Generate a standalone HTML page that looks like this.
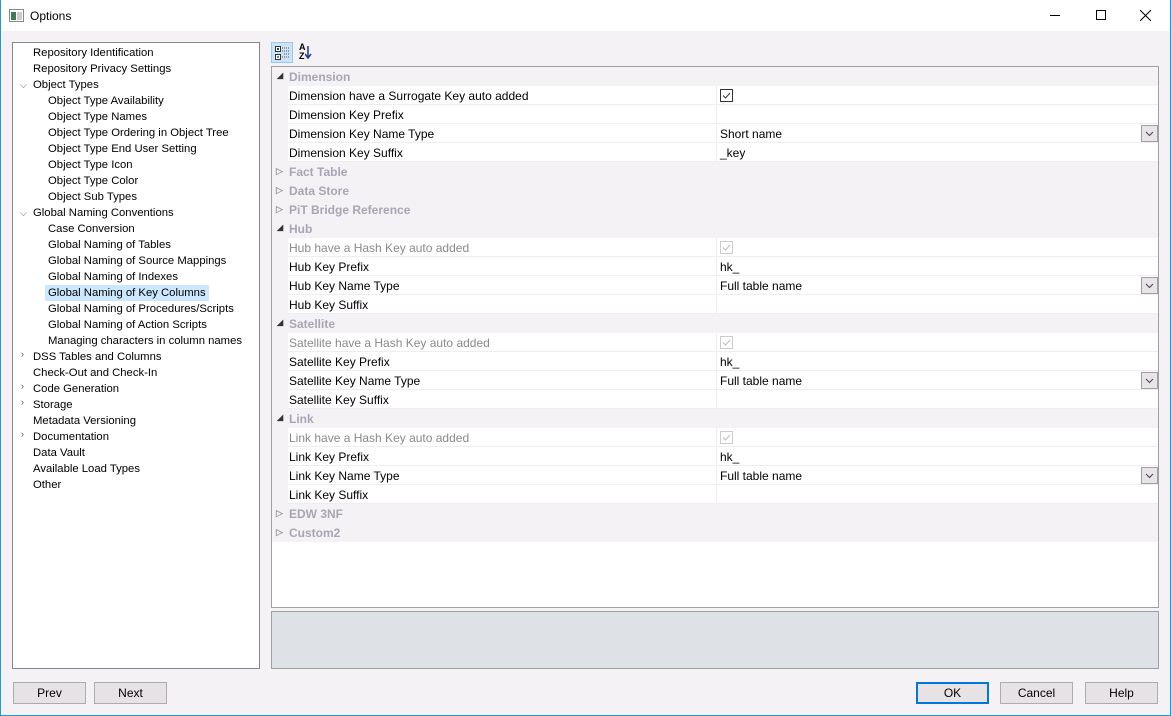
<!DOCTYPE html><html><head><style>
*{margin:0;padding:0;box-sizing:border-box}
body{width:1171px;height:716px;background:#f5f2f6;font-family:"Liberation Sans",sans-serif;font-size:12px;color:#000;position:relative;overflow:hidden}
.win{position:absolute;left:0;top:0;width:1171px;height:716px;border:1px solid #1f9ad6;border-top:none}
.title{position:absolute;left:0;top:0;width:1171px;height:31px;background:#fff}
.a{position:absolute;white-space:nowrap}
.tree{position:absolute;left:12px;top:42px;width:248px;height:627px;background:#fff;border:1px solid #828790;font-size:11.3px}
.t{position:absolute;line-height:16px;height:16px;white-space:nowrap;transform:translateY(1px)}
.chev{position:absolute;font-size:9px;color:#555;transform:translateY(1px)}
.grid{position:absolute;left:271px;top:66px;width:888px;height:542px;background:#fff;border:1px solid #a0a0a0}
.r{position:absolute;left:0;width:886px;height:19px}
.cat{background:#f5f2f6;color:#a7a6b4;font-weight:bold}
.prop{background:#fff;border-bottom:1px solid #f0edf0}
.gut{position:absolute;left:0;top:0;width:16px;height:19px;background:#f5f2f6}
.lbl{position:absolute;left:17px;top:3px}
.val{position:absolute;left:444px;top:0;width:442px;height:19px;border-left:1px solid #f0edf0;padding:3px 0 0 3px}
.dis{color:#8a8a8a}
.dd{position:absolute;right:0;top:1px;width:17px;height:17px;background:#e8e4e8;border:1px solid #a0a0a0}
.btn{position:absolute;height:22px;width:73px;background:#e6e2e6;border:1px solid #adadad;text-align:center;line-height:20px}
</style></head><body>
<div class="title"></div>
<div class="win"></div>
<svg class="a" style="left:9px;top:9px" width="15" height="13"><rect x=".5" y=".5" width="14" height="12" fill="#fff" stroke="#888"/><rect x="2" y="3" width="5" height="8" fill="#3f7a58"/><rect x="8" y="3" width="5" height="8" fill="#ccc"/></svg>
<div class="a" style="left:30px;top:9px;font-size:12px">Options</div>
<div class="a" style="left:1050px;top:15px;width:10px;height:1px;background:#000"></div>
<div class="a" style="left:1096px;top:10px;width:10px;height:10px;border:1px solid #000"></div>
<svg class="a" style="left:1140px;top:10px" width="11" height="11"><path d="M0 0L11 11M11 0L0 11" stroke="#000"/></svg>

<div class="tree">
<div class="t" style="left:20px;top:1px">Repository Identification</div>
<div class="t" style="left:20px;top:17px">Repository Privacy Settings</div>
<div class="chev" style="left:7px;top:36px">⌵</div><div class="t" style="left:20px;top:33px">Object Types</div>
<div class="t" style="left:35px;top:49px">Object Type Availability</div>
<div class="t" style="left:35px;top:65px">Object Type Names</div>
<div class="t" style="left:35px;top:81px">Object Type Ordering in Object Tree</div>
<div class="t" style="left:35px;top:97px">Object Type End User Setting</div>
<div class="t" style="left:35px;top:113px">Object Type Icon</div>
<div class="t" style="left:35px;top:129px">Object Type Color</div>
<div class="t" style="left:35px;top:145px">Object Sub Types</div>
<div class="chev" style="left:7px;top:164px">⌵</div><div class="t" style="left:20px;top:161px">Global Naming Conventions</div>
<div class="t" style="left:35px;top:177px">Case Conversion</div>
<div class="t" style="left:35px;top:193px">Global Naming of Tables</div>
<div class="t" style="left:35px;top:209px">Global Naming of Source Mappings</div>
<div class="t" style="left:35px;top:225px">Global Naming of Indexes</div>
<div class="t" style="left:32px;top:241px;background:#cce8ff;padding:0 3px">Global Naming of Key Columns</div>
<div class="t" style="left:35px;top:257px">Global Naming of Procedures/Scripts</div>
<div class="t" style="left:35px;top:273px">Global Naming of Action Scripts</div>
<div class="t" style="left:35px;top:289px">Managing characters in column names</div>
<div class="chev" style="left:8px;top:305px">›</div><div class="t" style="left:20px;top:305px">DSS Tables and Columns</div>
<div class="t" style="left:20px;top:321px">Check-Out and Check-In</div>
<div class="chev" style="left:8px;top:337px">›</div><div class="t" style="left:20px;top:337px">Code Generation</div>
<div class="chev" style="left:8px;top:353px">›</div><div class="t" style="left:20px;top:353px">Storage</div>
<div class="t" style="left:20px;top:369px">Metadata Versioning</div>
<div class="chev" style="left:8px;top:385px">›</div><div class="t" style="left:20px;top:385px">Documentation</div>
<div class="t" style="left:20px;top:401px">Data Vault</div>
<div class="t" style="left:20px;top:417px">Available Load Types</div>
<div class="t" style="left:20px;top:433px">Other</div>
</div>

<div class="a" style="left:271px;top:42px;width:22px;height:21px;background:#cce4f7;border:1px solid #99c9ef"></div>
<svg class="a" style="left:275px;top:45px" width="16" height="16"><rect x=".5" y="1.5" width="5" height="5" fill="#fff" stroke="#333"/><rect x=".5" y="9.5" width="5" height="5" fill="#fff" stroke="#333"/><path d="M2 4h2M3 3v2M2 12h2" stroke="#000"/><path d="M7 3h7M7 6h7M9 9h5M7 12h7" stroke="#555" stroke-dasharray="1 1"/></svg>
<div class="a" style="left:299px;top:43px;font-size:9px;line-height:9px;font-weight:bold">A<br>Z</div>
<svg class="a" style="left:305px;top:45px" width="8" height="16"><path d="M3 1v12M0 9l3 4 3-4" stroke="#1a3c9a" fill="none" stroke-width="1.5"/></svg>

<div class="grid">
<div class="r cat" style="top:0"><span class="a" style="left:5px;top:4px;font-size:8px;color:#333">◢</span><span class="lbl">Dimension</span></div>
<div class="r prop" style="top:19px"><div class="gut"></div><span class="lbl">Dimension have a Surrogate Key auto added</span><div class="val"><svg width="13" height="13"><rect x=".5" y=".5" width="12" height="12" fill="#fff" stroke="#333"/><path d="M3 6.5l2.5 2.5 4.5-5" stroke="#333" fill="none"/></svg></div></div>
<div class="r prop" style="top:38px"><div class="gut"></div><span class="lbl">Dimension Key Prefix</span><div class="val"></div></div>
<div class="r prop" style="top:57px"><div class="gut"></div><span class="lbl">Dimension Key Name Type</span><div class="val">Short name<div class="dd"><svg width="15" height="15"><path d="M4 6l3.5 3.5L11 6" stroke="#444" fill="none"/></svg></div></div></div>
<div class="r prop" style="top:76px"><div class="gut"></div><span class="lbl">Dimension Key Suffix</span><div class="val">_key</div></div>
<div class="r cat" style="top:95px"><span class="a" style="left:4px;top:4px;font-size:9px;color:#999">▷</span><span class="lbl">Fact Table</span></div>
<div class="r cat" style="top:114px"><span class="a" style="left:4px;top:4px;font-size:9px;color:#999">▷</span><span class="lbl">Data Store</span></div>
<div class="r cat" style="top:133px"><span class="a" style="left:4px;top:4px;font-size:9px;color:#999">▷</span><span class="lbl">PiT Bridge Reference</span></div>
<div class="r cat" style="top:152px"><span class="a" style="left:5px;top:4px;font-size:8px;color:#333">◢</span><span class="lbl">Hub</span></div>
<div class="r prop" style="top:171px"><div class="gut"></div><span class="lbl dis">Hub have a Hash Key auto added</span><div class="val"><svg width="13" height="13"><rect x=".5" y=".5" width="12" height="12" fill="#fff" stroke="#ccc"/><path d="M3 6.5l2.5 2.5 4.5-5" stroke="#bbb" fill="none"/></svg></div></div>
<div class="r prop" style="top:190px"><div class="gut"></div><span class="lbl">Hub Key Prefix</span><div class="val">hk_</div></div>
<div class="r prop" style="top:209px"><div class="gut"></div><span class="lbl">Hub Key Name Type</span><div class="val">Full table name<div class="dd"><svg width="15" height="15"><path d="M4 6l3.5 3.5L11 6" stroke="#444" fill="none"/></svg></div></div></div>
<div class="r prop" style="top:228px"><div class="gut"></div><span class="lbl">Hub Key Suffix</span><div class="val"></div></div>
<div class="r cat" style="top:247px"><span class="a" style="left:5px;top:4px;font-size:8px;color:#333">◢</span><span class="lbl">Satellite</span></div>
<div class="r prop" style="top:266px"><div class="gut"></div><span class="lbl dis">Satellite have a Hash Key auto added</span><div class="val"><svg width="13" height="13"><rect x=".5" y=".5" width="12" height="12" fill="#fff" stroke="#ccc"/><path d="M3 6.5l2.5 2.5 4.5-5" stroke="#bbb" fill="none"/></svg></div></div>
<div class="r prop" style="top:285px"><div class="gut"></div><span class="lbl">Satellite Key Prefix</span><div class="val">hk_</div></div>
<div class="r prop" style="top:304px"><div class="gut"></div><span class="lbl">Satellite Key Name Type</span><div class="val">Full table name<div class="dd"><svg width="15" height="15"><path d="M4 6l3.5 3.5L11 6" stroke="#444" fill="none"/></svg></div></div></div>
<div class="r prop" style="top:323px"><div class="gut"></div><span class="lbl">Satellite Key Suffix</span><div class="val"></div></div>
<div class="r cat" style="top:342px"><span class="a" style="left:5px;top:4px;font-size:8px;color:#333">◢</span><span class="lbl">Link</span></div>
<div class="r prop" style="top:361px"><div class="gut"></div><span class="lbl dis">Link have a Hash Key auto added</span><div class="val"><svg width="13" height="13"><rect x=".5" y=".5" width="12" height="12" fill="#fff" stroke="#ccc"/><path d="M3 6.5l2.5 2.5 4.5-5" stroke="#bbb" fill="none"/></svg></div></div>
<div class="r prop" style="top:380px"><div class="gut"></div><span class="lbl">Link Key Prefix</span><div class="val">hk_</div></div>
<div class="r prop" style="top:399px"><div class="gut"></div><span class="lbl">Link Key Name Type</span><div class="val">Full table name<div class="dd"><svg width="15" height="15"><path d="M4 6l3.5 3.5L11 6" stroke="#444" fill="none"/></svg></div></div></div>
<div class="r prop" style="top:418px"><div class="gut"></div><span class="lbl">Link Key Suffix</span><div class="val"></div></div>
<div class="r cat" style="top:437px"><span class="a" style="left:4px;top:4px;font-size:9px;color:#999">▷</span><span class="lbl">EDW 3NF</span></div>
<div class="r cat" style="top:456px"><span class="a" style="left:4px;top:4px;font-size:9px;color:#999">▷</span><span class="lbl">Custom2</span></div>
</div>

<div class="a" style="left:271px;top:611px;width:888px;height:58px;background:#dee2e6;border:1px solid #a0a0a0"></div>

<div class="btn" style="left:13px;top:682px">Prev</div>
<div class="btn" style="left:94px;top:682px">Next</div>
<div class="btn" style="left:916px;top:682px;border:2px solid #0078d7;line-height:18px">OK</div>
<div class="btn" style="left:1000px;top:682px">Cancel</div>
<div class="btn" style="left:1085px;top:682px">Help</div>
</body></html>
